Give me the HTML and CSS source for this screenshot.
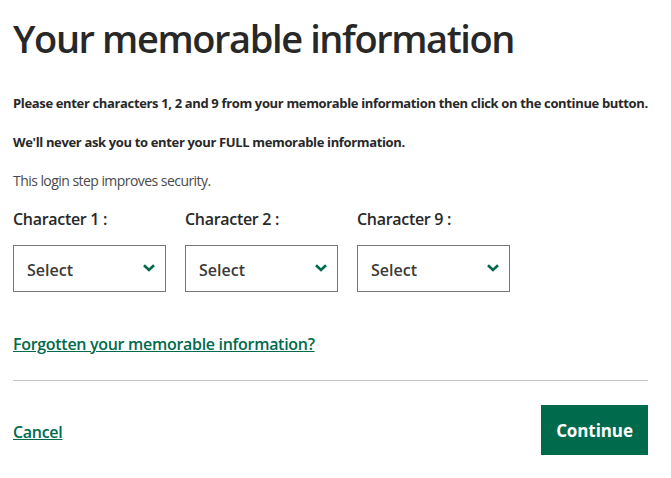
FILE: index.html
```html
<!DOCTYPE html>
<html lang="en">
<head>
<meta charset="utf-8">
<title>Your memorable information</title>
<link rel="stylesheet" href="styles.css">
</head>
<body>
<main class="page">
  <h1 class="title">Your memorable information</h1>
  <p class="intro strong">Please enter characters 1, 2 and 9 from your memorable information then click on the continue button.</p>
  <p class="intro strong second">We'll never ask you to enter your FULL memorable information.</p>
  <p class="intro note">This login step improves security.</p>
  <div class="fields">
    <div class="field">
      <label class="label">Character 1 :</label>
      <div class="select"><span>Select</span><svg class="chev" viewBox="0 0 12 8" width="12" height="8"><path d="M1 1.2 6 6l5-4.8" fill="none" stroke="#006a4d" stroke-width="2.6"/></svg></div>
    </div>
    <div class="field">
      <label class="label">Character 2 :</label>
      <div class="select"><span>Select</span><svg class="chev" viewBox="0 0 12 8" width="12" height="8"><path d="M1 1.2 6 6l5-4.8" fill="none" stroke="#006a4d" stroke-width="2.6"/></svg></div>
    </div>
    <div class="field">
      <label class="label">Character 9 :</label>
      <div class="select"><span>Select</span><svg class="chev" viewBox="0 0 12 8" width="12" height="8"><path d="M1 1.2 6 6l5-4.8" fill="none" stroke="#006a4d" stroke-width="2.6"/></svg></div>
    </div>
  </div>
  <a class="link forgot" href="#">Forgotten your memorable information?</a>
  <hr class="rule">
  <div class="actions">
    <a class="link" href="#">Cancel</a>
    <button class="btn">Continue</button>
  </div>
</main>
</body>
</html>
```
FILE: styles.css
```css
* { box-sizing: border-box; }
body {
  margin: 0;
  background: #fff;
  color: #282828;
  font-family: "Open Sans", "Noto Sans", sans-serif;
}
.page {
  padding: 0 23px 0 13px;
}
.title {
  margin: 0;
  padding-top: 12px;
  font-size: 38px;
  font-weight: 600;
  line-height: 52px;
  letter-spacing: -1.4px;
  color: #282828;
}
.intro {
  margin: 0;
  font-size: 13px;
  line-height: 18px;
}
.strong { font-weight: 700; margin-top: 30px; letter-spacing: -0.35px; }
.second { margin-top: 21px; }
.note { margin-top: 21px; color: #4a4a4a; font-size: 14px; letter-spacing: -0.55px; }
.fields {
  display: flex;
  gap: 19px;
  margin-top: 19px;
}
.field { display: flex; flex-direction: column; gap: 16px; }
.label { font-size: 16px; font-weight: 600; line-height: 20px; letter-spacing: -0.3px; }
.select {
  width: 153px;
  height: 47px;
  border: 1px solid #767676;
  display: flex;
  align-items: center;
  justify-content: space-between;
  padding: 2px 10px 0 13px;
  font-size: 16px;
  font-weight: 600;
  color: #3a3a3a;
}
.chev { display: block; margin-top: -4px; }
.link {
  color: #006a4d;
  font-size: 16px;
  font-weight: 600;
  text-decoration: underline;
  letter-spacing: -0.3px;
}
.forgot { display: inline-block; margin-top: 41px; }
.rule {
  margin: 25px 0 0;
  border: 0;
  border-top: 1px solid #c4c4c4;
}
.actions {
  display: flex;
  justify-content: space-between;
  align-items: center;
  margin-top: 24px;
}
.actions .link { margin-top: 4px; }
.btn {
  width: 107px;
  height: 50px;
  border: 0;
  background: #006a4d;
  color: #fff;
  font-family: inherit;
  font-size: 17px;
  font-weight: 700;
  letter-spacing: -0.1px;
}
```
